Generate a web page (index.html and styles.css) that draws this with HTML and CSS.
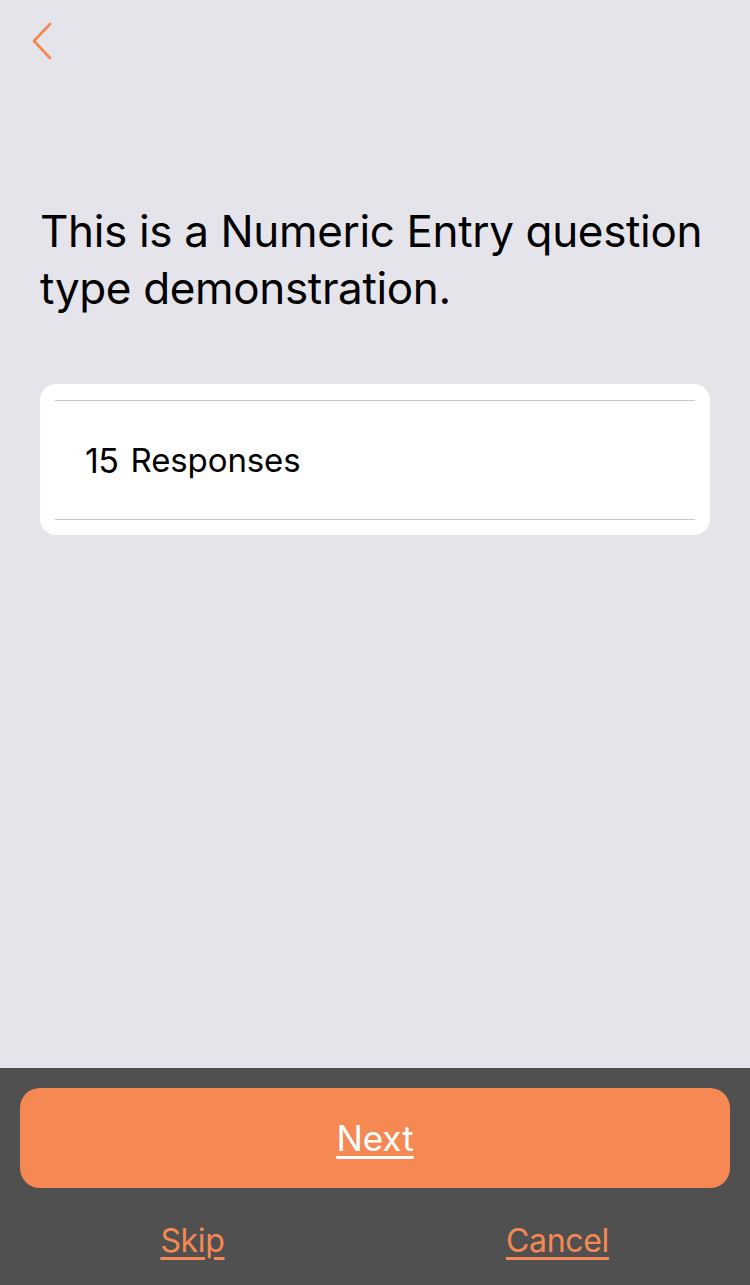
FILE: index.html
```html
<!DOCTYPE html>
<html>
<head>
<meta charset="utf-8">
<link rel="stylesheet" href="styles.css">
</head>
<body>
<div class="screen">
  <header class="topbar">
    <svg class="back" width="22" height="38" viewBox="0 0 22 38"><path d="M19 2 L3 19 L19 36" fill="none" stroke="#f4874f" stroke-width="2.6" stroke-linecap="round" stroke-linejoin="round"/></svg>
  </header>
  <main class="content">
    <h1 class="question">This is a Numeric Entry question type demonstration.</h1>
    <div class="card">
      <div class="row">
        <span class="value">15</span>
        <span class="label">Responses</span>
      </div>
    </div>
  </main>
  <footer class="footer">
    <a class="next">Next</a>
    <div class="links">
      <a class="link">Skip</a>
      <a class="link">Cancel</a>
    </div>
  </footer>
</div>
</body>
</html>
```
FILE: styles.css
```css
html, body { margin: 0; padding: 0; }
body { font-family: Inter, "Noto Sans", sans-serif; background: #e5e4ea; }
.screen { width: 750px; height: 1285px; display: flex; flex-direction: column; }
.topbar { height: 180px; padding: 22px 0 0 31px; box-sizing: border-box; }
.back { display: block; }
.content { flex: 1; padding: 0 40px 0 40px; }
.question { margin: 23px 0 0 0; font-size: 44px; font-weight: 400; line-height: 57px; color: #000; letter-spacing: -0.35px; }
.card { margin-top: 67px; background: #fff; border-radius: 16px; padding: 16px 15px 15px; }
.row { border-top: 1px solid #c8c7cc; border-bottom: 1px solid #c8c7cc; height: 118px; display: flex; align-items: center; padding-left: 30px; gap: 12px; color: #000; }
.value { font-size: 34px; letter-spacing: -0.5px; }
.label { font-size: 33px; letter-spacing: -0.1px; }
.footer { background: #505050; height: 217px; padding: 20px 20px 0 20px; box-sizing: border-box; }
.next { display: flex; align-items: center; justify-content: center; height: 100px; background: #f68853; border-radius: 20px; color: #fff; font-size: 35px; text-decoration: underline; text-decoration-thickness: 3px; text-underline-offset: 5px; }
.links { display: flex; margin: 0 -10px; }
.link { flex: 1; text-align: center; color: #f68853; font-size: 32px; text-decoration: underline; text-decoration-thickness: 3px; text-underline-offset: 5px; padding-top: 33px; letter-spacing: -0.3px; }
```
